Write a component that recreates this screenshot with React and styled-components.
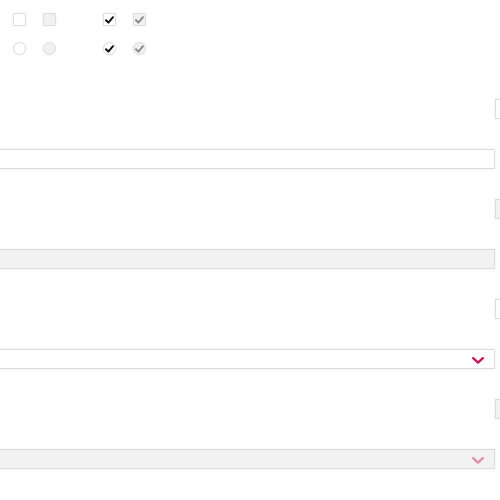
import React from 'react'
import styled, { createGlobalStyle } from 'styled-components'

const GlobalStyle = createGlobalStyle`
    html, body {
        margin: 0;
        padding: 0;
        overflow: hidden;
        background: #fff;
        font-family: "Liberation Sans", Arial, sans-serif;
    }
`

const StyledPage = styled.div`
    width: 500px;
    height: 500px;
    overflow: hidden;
`
const StyledToggles = styled.div`
    display: grid;
    grid-template-columns: repeat(5, 13px);
    grid-auto-rows: 13px;
    column-gap: 17px;
    row-gap: 16px;
    padding: 13px 0 0 13px;
`
const StyledToggle = styled.span`
    box-sizing: border-box;
    width: 13px;
    height: 13px;
    display: flex;
    align-items: center;
    justify-content: center;
    grid-column: ${props => props.col};
    border: 1px solid #dedede;
    border-radius: ${props => props.round ? '50%' : '1px'};
    background: ${props => props.disabled ? '#f1f1f1' : '#fff'};
    box-shadow: 0 0 2px rgba(0, 0, 0, 0.08);
    svg {
        display: block;
    }
`
const StyledFields = styled.div`
    display: flex;
    flex-direction: column;
    gap: 30px;
    margin: 44px 0 0 -20px;
`
const StyledField = styled.div`
    display: grid;
    grid-template-columns: 515px 30px;
    grid-template-rows: 20px 20px;
    row-gap: 30px;
`
const StyledSmallBox = styled.div`
    box-sizing: border-box;
    grid-column: 2;
    grid-row: 1;
    height: 20px;
    border: 1px solid #dcdcdc;
    background: ${props => props.disabled ? '#f2f2f2' : '#fff'};
    box-shadow: 0 0 3px rgba(0, 0, 0, 0.07);
`
const StyledInput = styled.div`
    box-sizing: border-box;
    grid-column: 1;
    grid-row: 2;
    height: 20px;
    display: flex;
    align-items: center;
    justify-content: flex-end;
    padding: 2px 10px 0 0;
    border: 1px solid #dcdcdc;
    background: ${props => props.disabled ? '#f2f2f2' : '#fff'};
    box-shadow: 0 0 3px rgba(0, 0, 0, 0.08);
    svg {
        opacity: ${props => props.disabled ? 0.45 : 1};
    }
`

const Check = ({ color }) => (
    <svg width="9" height="8" viewBox="0 0 9 8">
        <path d="M1 4.2 L3.4 6.6 L8 1.2" fill="none" stroke={color} strokeWidth="2" strokeLinecap="round" strokeLinejoin="round" />
    </svg>
)

const Chevron = () => (
    <svg width="12" height="7" viewBox="0 0 12 7">
        <path d="M1.2 1.2 L6 5.6 L10.8 1.2" fill="none" stroke="#c8175d" strokeWidth="2.4" strokeLinecap="round" strokeLinejoin="round" />
    </svg>
)

const fields = [
    { disabled: false, select: false },
    { disabled: true, select: false },
    { disabled: false, select: true },
    { disabled: true, select: true },
]

const App = () => {
    return (
        <StyledPage>
            <GlobalStyle />
            <StyledToggles>
                <StyledToggle col={1} />
                <StyledToggle col={2} disabled />
                <StyledToggle col={4}><Check color="#111" /></StyledToggle>
                <StyledToggle col={5} disabled><Check color="#8a8a8a" /></StyledToggle>
                <StyledToggle col={1} round />
                <StyledToggle col={2} round disabled />
                <StyledToggle col={4} round><Check color="#111" /></StyledToggle>
                <StyledToggle col={5} round disabled><Check color="#8a8a8a" /></StyledToggle>
            </StyledToggles>
            <StyledFields>
                {fields.map((field, i) => (
                    <StyledField key={i}>
                        <StyledSmallBox disabled={field.disabled} />
                        <StyledInput disabled={field.disabled}>
                            {field.select && <Chevron />}
                        </StyledInput>
                    </StyledField>
                ))}
            </StyledFields>
        </StyledPage>
    )
}

export default App
